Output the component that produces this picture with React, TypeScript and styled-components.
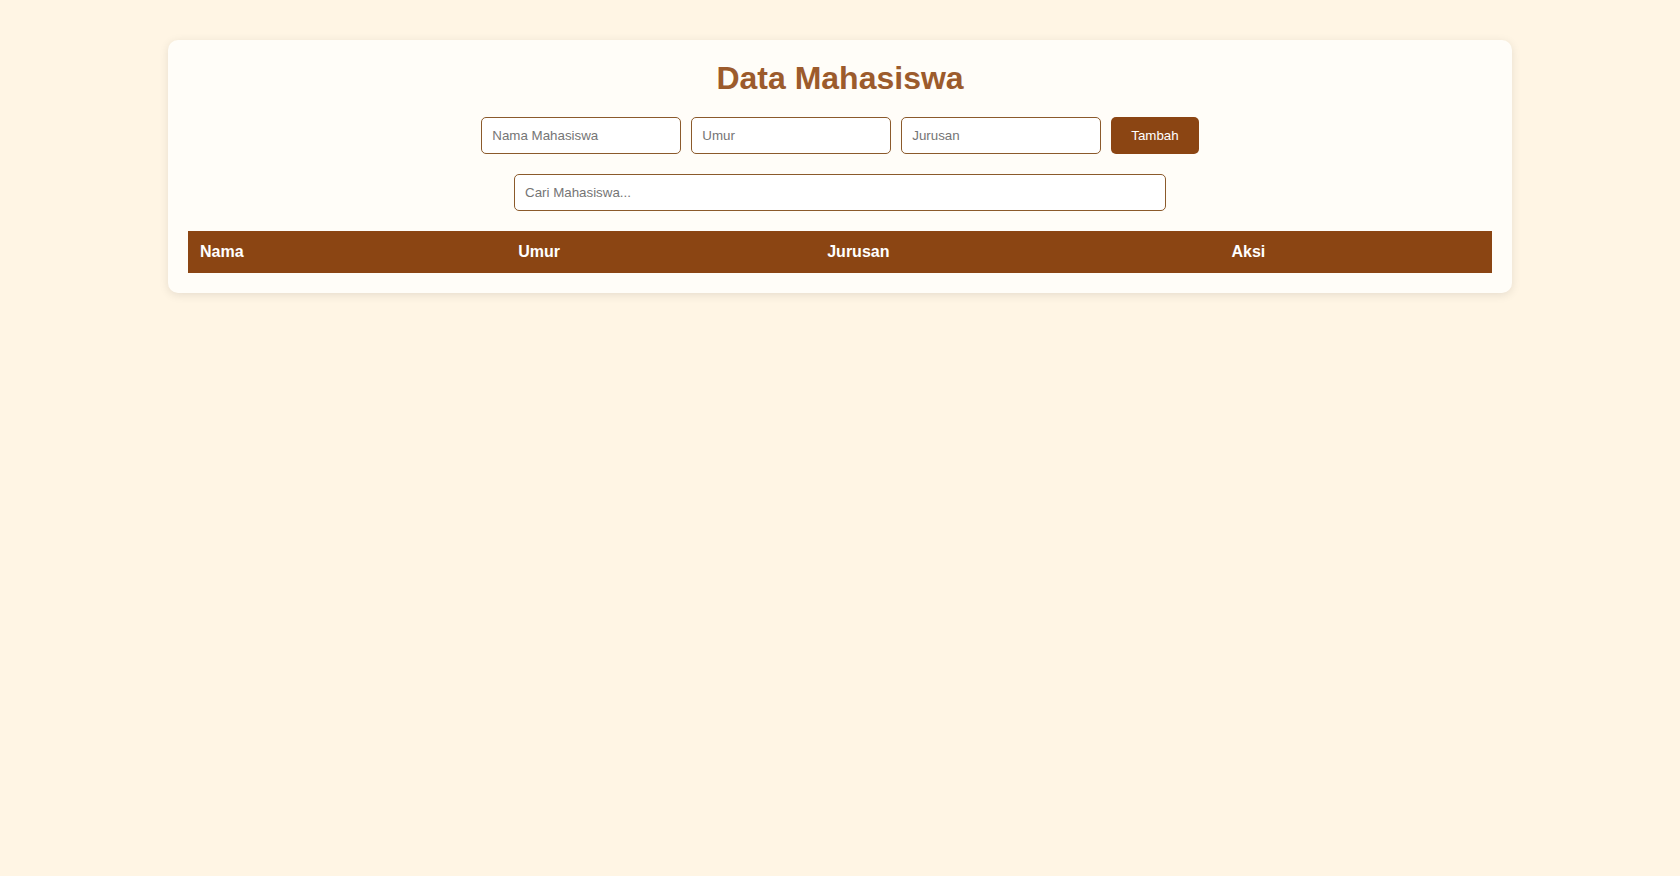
import React from "react";
import styled, { createGlobalStyle } from "styled-components";

const Global = createGlobalStyle`
  html, body { margin: 0; padding: 0; }
  body {
    background: #fff5e4;
    font-family: "Liberation Sans", Arial, sans-serif;
  }
`;

const Card = styled.div`
  width: 80%;
  margin: 40px auto;
  padding: 20px;
  box-sizing: border-box;
  background: #fffdf8;
  border-radius: 10px;
  box-shadow: 0 2px 10px rgba(0, 0, 0, 0.1);
`;

const Title = styled.h1`
  margin: 0 0 20px;
  text-align: center;
  color: #9c5b2c;
  font-size: 32px;
  font-weight: bold;
`;

const FormRow = styled.div`
  display: flex;
  justify-content: center;
  gap: 10px;
  margin-bottom: 20px;
`;

const Input = styled.input<{ $wide?: boolean }>`
  box-sizing: border-box;
  width: ${(p) => (p.$wide ? "50%" : "200px")};
  height: 37px;
  padding: 0 10px;
  border: 1px solid #8b5a2b;
  border-radius: 5px;
  background: #fff;
  font-family: "Liberation Sans", Arial, sans-serif;
  font-size: 13.333px;
  color: #333;
  outline: none;
  &::placeholder { color: #757575; }
`;

const Button = styled.button`
  box-sizing: border-box;
  height: 37px;
  padding: 0 20px;
  border: none;
  border-radius: 5px;
  background: #8b4513;
  color: #fff;
  font-family: "Liberation Sans", Arial, sans-serif;
  font-size: 13.333px;
  cursor: pointer;
`;

const SearchRow = styled.div`
  display: flex;
  justify-content: center;
  margin-bottom: 20px;
`;

const Table = styled.table`
  width: 100%;
  border-collapse: collapse;
`;

const Th = styled.th<{ $w: string }>`
  width: ${(p) => p.$w};
  padding: 12px;
  background: #8b4513;
  color: #fff;
  text-align: left;
  font-size: 16px;
  font-weight: bold;
`;

export default function App() {
  return (
    <>
      <Global />
      <Card>
        <Title>Data Mahasiswa</Title>
        <FormRow>
          <Input placeholder="Nama Mahasiswa" />
          <Input placeholder="Umur" />
          <Input placeholder="Jurusan" />
          <Button>Tambah</Button>
        </FormRow>
        <SearchRow>
          <Input $wide placeholder="Cari Mahasiswa..." />
        </SearchRow>
        <Table>
          <thead>
            <tr>
              <Th $w="24.4%">Nama</Th>
              <Th $w="23.7%">Umur</Th>
              <Th $w="31%">Jurusan</Th>
              <Th $w="20.9%">Aksi</Th>
            </tr>
          </thead>
          <tbody></tbody>
        </Table>
      </Card>
    </>
  );
}
